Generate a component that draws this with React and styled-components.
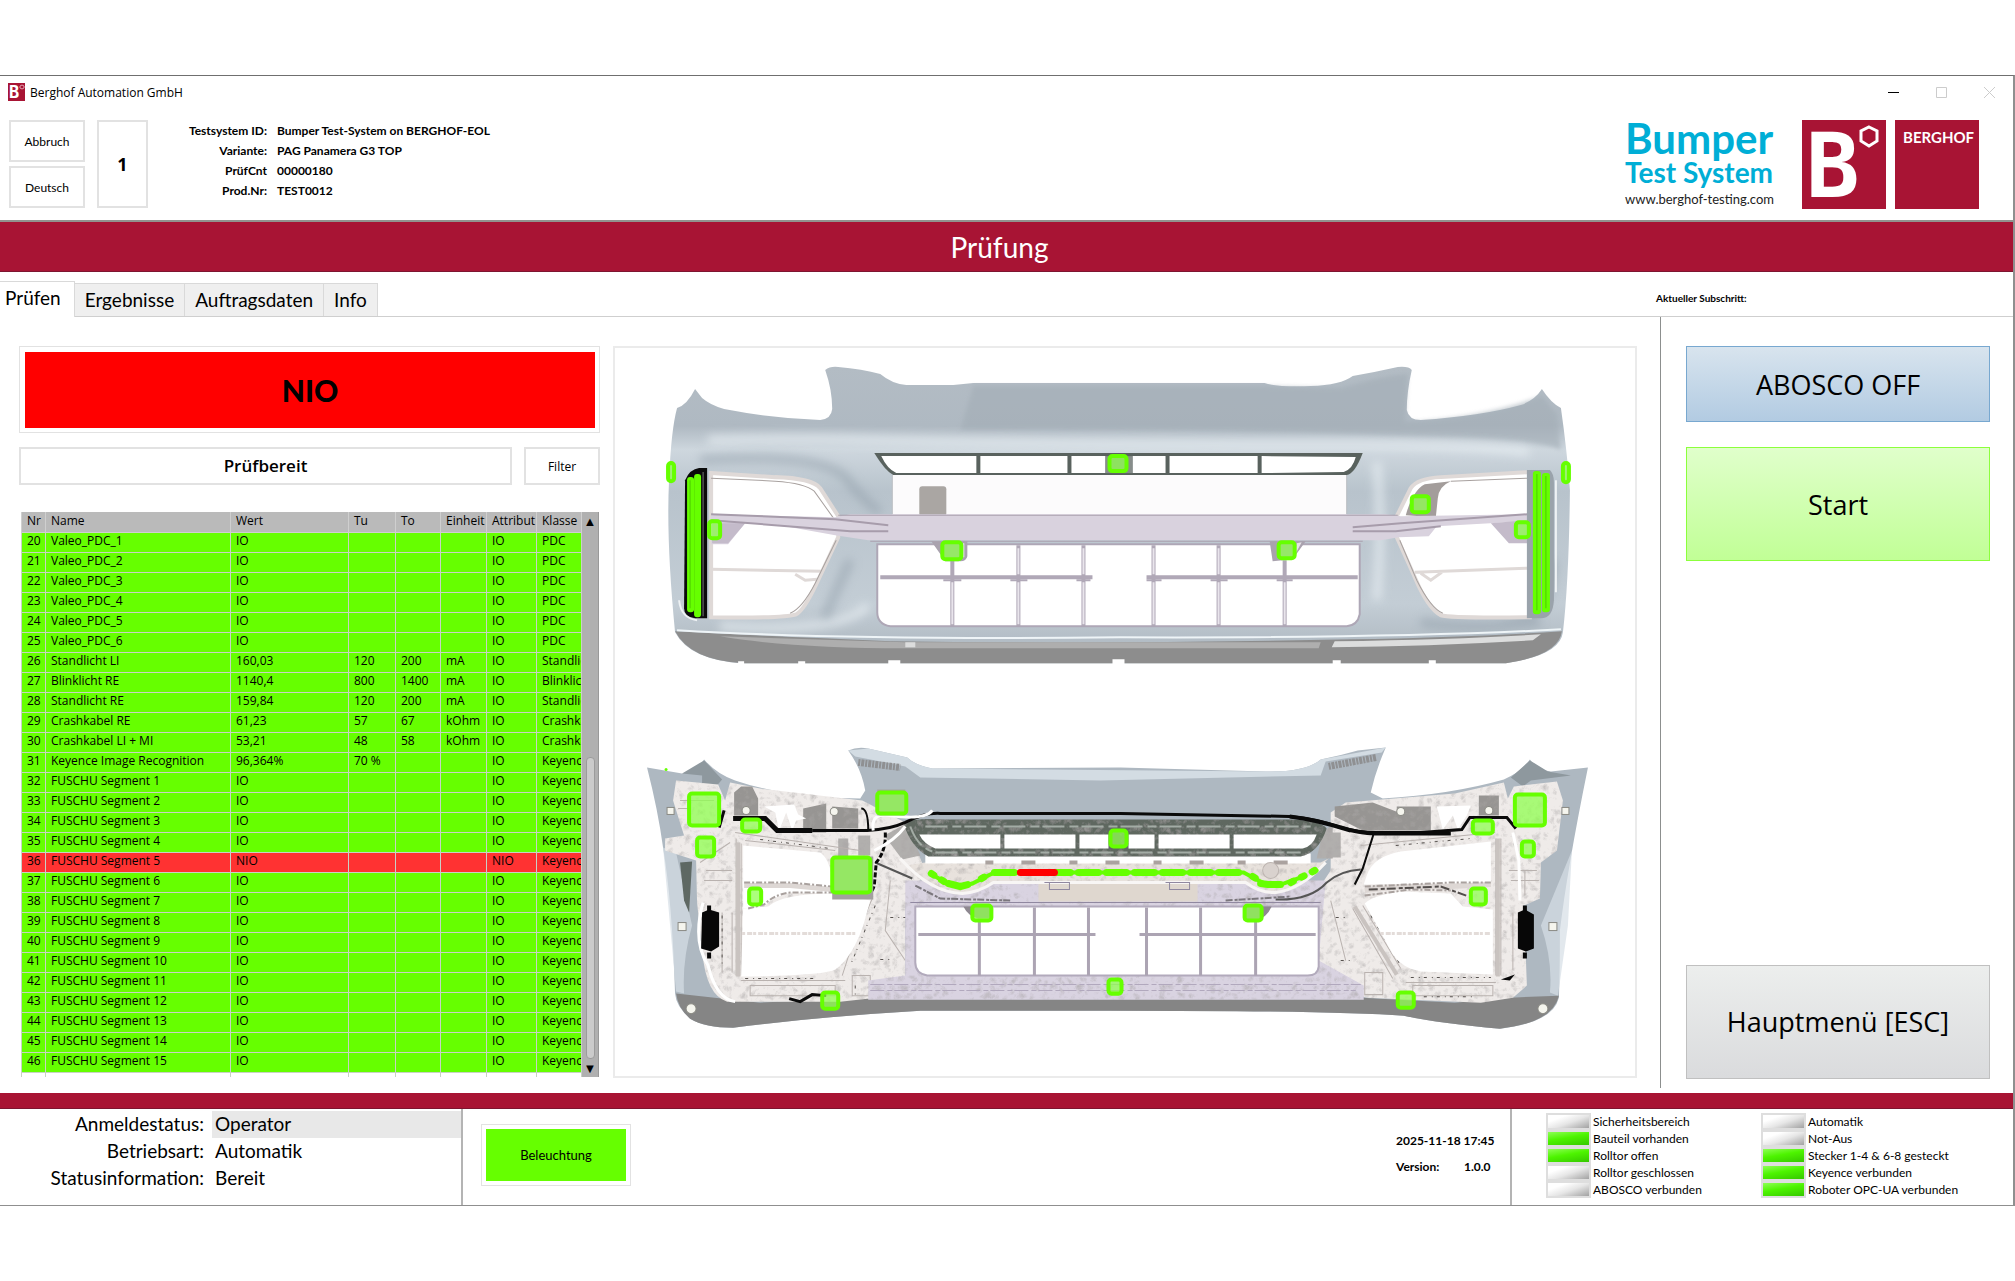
import React, { useState } from 'react';
import styled, { createGlobalStyle, css } from 'styled-components';

const color = {
    brand: '#a81434',
    cyan: '#00aed6',
    ok: '#66ff00',
    fail: '#ff0000',
    failRow: '#ff3232',
    line: '#e2e2e2',
    dark: '#8c8f8e',
    grid: '#c8d2c4'
};

const font = {
    label: "Lato, 'Noto Sans', sans-serif",
    ui: "'Open Sans', 'Noto Sans', sans-serif"
};

const GlobalStyle = createGlobalStyle`
    * {
        box-sizing: border-box;
    }

    body {
        margin: 0;
        background: #fff;
        color: #000;
        font-family: ${font.label};
    }

    button {
        font: inherit;
        color: inherit;
        cursor: pointer;
    }
`;

const Page = styled.div`
    padding: 75px 0;
`;

const Window = styled.div`
    border-top: 1px solid #6f6f6f;
    border-right: 2px solid #8f8f8f;
    border-bottom: 1px solid #8f8f8f;
    background: #fff;
`;

const TitleBar = styled.div`
    display: flex;
    align-items: center;
    height: 32px;
    padding-left: 8px;
    gap: 5px;
    font-family: ${font.ui};
    font-size: 12px;
`;

const WindowButtons = styled.div`
    display: flex;
    margin-left: auto;
`;

const WindowButton = styled.button`
    display: flex;
    align-items: center;
    justify-content: center;
    width: 48px;
    height: 28px;
    padding: 0;
    border: 0;
    background: none;
`;

const Header = styled.header`
    display: flex;
    align-items: flex-start;
    padding: 12px 33px 11px 9px;
    border-bottom: 2px solid #93938f;
`;

const ButtonStack = styled.div`
    display: flex;
    flex-direction: column;
    gap: 4px;
    margin-right: 12px;
`;

const OutlineButton = styled.button`
    width: 76px;
    height: ${props => props.$height || 42}px;
    padding: 0;
    border: 2px solid ${color.line};
    background: #fff;
    font-family: ${props => props.$ui ? font.ui : font.label};
    font-size: 12px;
`;

const Station = styled.div`
    display: flex;
    align-items: center;
    justify-content: center;
    width: 51px;
    height: 88px;
    border: 2px solid ${color.line};
    font-family: ${font.ui};
    font-size: 18px;
    font-weight: 700;
`;

const Facts = styled.dl`
    display: grid;
    grid-template-columns: 110px auto;
    column-gap: 10px;
    margin: 1px 0 0 9px;
    font-size: 12px;
    font-weight: 700;
    line-height: 20px;

    dt {
        text-align: right;
    }

    dd {
        margin: 0;
    }
`;

const Logos = styled.div`
    display: flex;
    align-items: flex-start;
    gap: 28px;
    margin-left: auto;
`;

const Product = styled.div`
    color: ${color.cyan};
    font-weight: 700;
    white-space: nowrap;
`;

const ProductName = styled.div`
    font-size: 42px;
    line-height: 37px;
`;

const ProductLine = styled.div`
    font-size: 28px;
    line-height: 30px;
`;

const ProductLink = styled.a`
    display: block;
    padding-top: 2px;
    color: #222;
    font-size: 13px;
    font-weight: 400;
    line-height: 20px;
    text-decoration: none;
`;

const Title = styled.h1`
    margin: 0;
    padding: 1px 14px 0 0;
    background: ${color.brand};
    border-bottom: 1px solid #7d1530;
    color: #fff;
    font-family: ${font.label};
    font-size: 28px;
    font-weight: 400;
    line-height: 48px;
    text-align: center;
`;

const TabBar = styled.div`
    display: flex;
    align-items: flex-end;
    height: 45px;
    border-bottom: 1px solid #cfcfcf;
`;

const Tab = styled.button`
    height: 33px;
    padding: 0 10px 2px;
    border: 1px solid #d9d9d9;
    border-width: 1px 1px 0 0;
    background: #efefef;
    font-size: 19px;

    ${props => props.$active && css`
        height: 36px;
        margin-bottom: -1px;
        padding: 0 13px 4px 5px;
        background: #fff;
    `}
`;

const Substep = styled.div`
    width: 357px;
    margin-left: auto;
    font-size: 10px;
    font-weight: 700;
    line-height: 36px;
`;

const Main = styled.main`
    display: grid;
    grid-template-columns: 581px minmax(0, 1fr) 353px;
    padding-left: 19px;
    margin-bottom: 5px;
`;

const Results = styled.section`
    padding: 29px 0 10px;
`;

const Verdict = styled.div`
    height: 87px;
    padding: 5px 4px 4px 5px;
    border: 1px solid ${color.line};

    strong {
        display: flex;
        align-items: center;
        justify-content: center;
        height: 100%;
        background: ${color.fail};
        font-size: 30px;
        font-weight: 900;
    }
`;

const StateRow = styled.div`
    display: flex;
    gap: 12px;
    margin: 14px 0 27px;
`;

const State = styled.div`
    flex: 1;
    border: 2px solid ${color.line};
    font-family: ${font.ui};
    font-size: 17px;
    font-weight: 600;
    line-height: 34px;
    text-align: center;
`;

const Grid = styled.div`
    display: flex;
    margin: 0 1px 0 2px;
`;

const Table = styled.table`
    flex: 1;
    min-width: 0;
    width: 100%;
    table-layout: fixed;
    border-collapse: collapse;
    font-family: ${font.ui};
    font-size: 12px;
    line-height: 16px;

    th,
    td {
        height: 20px;
        padding: 0 0 2px 5px;
        border: 1px solid ${color.grid};
        border-width: 0 1px 1px 1px;
        overflow: hidden;
        font-weight: 400;
        text-align: left;
        white-space: nowrap;
    }

    th {
        border-color: #cfcfcf;
        background: #bababa;
    }
`;

const Row = styled.tr`
    background: ${props => props.$failed ? color.failRow : color.ok};
`;

const SpareRow = styled.tr`
    td {
        height: 5px;
        padding: 0;
        border-bottom: 0;
    }
`;

const Scroll = styled.div`
    display: flex;
    flex-direction: column;
    width: 18px;
    border-right: 1px solid #999;
    background: #b0b0b0;
`;

const ScrollButton = styled.button`
    height: 18px;
    padding: 0;
    border: 0;
    background: none;
    font-size: 13px;
    line-height: 18px;
`;

const Thumb = styled.div`
    flex: 0 1 302px;
    margin: auto 3px 0 4px;
    border: 1px solid #9b9b9b;
    border-radius: 4px;
    background: #cbcbcb;
`;

const Picture = styled.figure`
    margin: 29px 23px 10px 13px;
    border: 2px solid #ebebeb;

    svg {
        display: block;
        width: 100%;
        height: 100%;
    }
`;

const Actions = styled.aside`
    display: flex;
    flex-direction: column;
    padding: 29px 23px 9px 25px;
    border-left: 1px solid ${color.dark};
`;

const tones = {
    blue: ['#d8e4ee', '#b2cbe2', '#78a8d0'],
    green: ['#e0ffcb', '#c1ff96', '#8cff3c'],
    grey: ['#eceeed', '#dadbdd', '#c0c0c0']
};

const ActionButton = styled.button`
    height: ${props => props.$tall ? 114 : 76}px;
    margin-bottom: 25px;
    padding: 0;
    border: 1px solid ${props => tones[props.$tone][2]};
    background: linear-gradient(${props => tones[props.$tone][0]}, ${props => tones[props.$tone][1]});
    font-family: ${font.ui};
    font-size: 27px;

    &:last-child {
        margin: auto 0 0;
    }
`;

const Divider = styled.div`
    height: 16px;
    background: ${color.brand};
    border-bottom: 1px solid #7d1530;
`;

const Footer = styled.footer`
    display: flex;
    min-height: 96px;
`;

const Session = styled.dl`
    display: grid;
    grid-template-columns: 204px 1fr;
    grid-auto-rows: 27px;
    column-gap: 8px;
    width: 463px;
    margin: 0;
    padding-top: 2px;
    border-right: 2px solid #b4b4b4;
    font-size: 19px;
    line-height: 26px;

    dt {
        text-align: right;
    }

    dd {
        margin: 0;
        padding-left: 3px;
    }

    dd:first-of-type {
        background: #e8e8e8;
    }
`;

const Light = styled.div`
    align-self: flex-start;
    margin: 15px 0 0 18px;
    padding: 4px;
    border: 1px solid ${color.line};
`;

const LightButton = styled.button`
    display: block;
    width: 140px;
    height: 52px;
    border: 0;
    background: ${color.ok};
    font-size: 13px;
`;

const Build = styled.div`
    display: grid;
    grid-template-columns: 68px 31px;
    align-content: start;
    margin: 19px 15px 0 auto;
    font-size: 12px;
    font-weight: 700;
    line-height: 26px;
    white-space: nowrap;

    time {
        grid-column: 1 / -1;
    }
`;

const Signals = styled.ul`
    display: grid;
    grid-template-columns: 215px 1fr;
    grid-template-rows: repeat(5, 17px);
    grid-auto-flow: column;
    width: 503px;
    margin: 0;
    padding: 4px 0 0 34px;
    border-left: 2px solid #b4b4b4;
    list-style: none;
    font-size: 12px;
    line-height: 17px;
`;

const Signal = styled.li`
    display: flex;
    align-items: center;
    gap: 2px;

    &::before {
        content: '';
        width: 41px;
        height: 13px;
        border: 2px solid #dedede;
        background: ${props => props.$on
            ? 'linear-gradient(170deg, #8dff55, #4df400 45%, #36c800)'
            : 'linear-gradient(160deg, #fff 25%, #e6e6e6 55%, #a2a2a2)'};
    }
`;

const rows = [
    [20, 'Valeo_PDC_1', 'IO', '', '', '', 'IO', 'PDC'],
    [21, 'Valeo_PDC_2', 'IO', '', '', '', 'IO', 'PDC'],
    [22, 'Valeo_PDC_3', 'IO', '', '', '', 'IO', 'PDC'],
    [23, 'Valeo_PDC_4', 'IO', '', '', '', 'IO', 'PDC'],
    [24, 'Valeo_PDC_5', 'IO', '', '', '', 'IO', 'PDC'],
    [25, 'Valeo_PDC_6', 'IO', '', '', '', 'IO', 'PDC'],
    [26, 'Standlicht LI', '160,03', '120', '200', 'mA', 'IO', 'Standlicht'],
    [27, 'Blinklicht RE', '1140,4', '800', '1400', 'mA', 'IO', 'Blinklicht'],
    [28, 'Standlicht RE', '159,84', '120', '200', 'mA', 'IO', 'Standlicht'],
    [29, 'Crashkabel RE', '61,23', '57', '67', 'kOhm', 'IO', 'Crashkabel'],
    [30, 'Crashkabel LI + MI', '53,21', '48', '58', 'kOhm', 'IO', 'Crashkabel'],
    [31, 'Keyence Image Recognition', '96,364%', '70 %', '', '', 'IO', 'Keyence'],
    ...Array.from({ length: 15 }, (_, i) => {
        const result = i === 4 ? 'NIO' : 'IO';
        return [32 + i, `FUSCHU Segment ${i + 1}`, result, '', '', '', result, 'Keyence'];
    })
];

const columns = [
    ['Nr', 24],
    ['Name', 185],
    ['Wert', 118],
    ['Tu', 47],
    ['To', 45],
    ['Einheit', 46],
    ['Attribut', 50],
    ['Klasse', 45]
];

const signals = [
    ['Sicherheitsbereich', false],
    ['Bauteil vorhanden', true],
    ['Rolltor offen', true],
    ['Rolltor geschlossen', false],
    ['ABOSCO verbunden', false],
    ['Automatik', false],
    ['Not-Aus', false],
    ['Stecker 1-4 & 6-8 gesteckt', true],
    ['Keyence verbunden', true],
    ['Roboter OPC-UA verbunden', true]
];

// x, y, width, height of every checked part
const frontMarks = [
    [668, 463, 6, 18], [709, 521, 11, 17], [942, 542, 19, 17], [1109, 456, 17, 15],
    [1278, 542, 16, 16], [1411, 496, 17, 16], [1515, 522, 13, 15], [1562, 463, 6, 19]
];

const rearMarks = [
    [689, 793, 30, 32], [697, 837, 17, 19], [742, 819, 18, 12], [877, 792, 29, 21],
    [832, 857, 38, 35], [749, 888, 12, 16], [972, 905, 19, 15], [822, 992, 16, 16],
    [1108, 979, 13, 14], [1110, 830, 16, 16], [1514, 794, 30, 31], [1521, 841, 12, 15],
    [1472, 820, 20, 13], [1470, 888, 15, 16], [1244, 905, 17, 15], [1397, 992, 16, 15]
];

const Marks = ({ items }) => (
    <g fill="#90ff50" fillOpacity="0.75" stroke="#66ff00" strokeWidth="4">
        {items.map(([x, y, w, h]) => (
            <rect key={`${x}-${y}`} x={x} y={y} width={w} height={h} rx="3" />
        ))}
    </g>
);

const FrontBumper = () => (
    <g>
        <path
            fill="url(#shell)"
            d="M677 408 Q687 405 695 389 L702 398 Q710 405 724 409 Q770 418 820 420 Q831 419 832 409 Q832 390 825 370 Q830 366 838 367 Q862 369 880 374 Q892 384 906 385 L953 385 L973 383 H1264 Q1276 387 1310 386 Q1340 385 1352 376 Q1375 372 1397 367 Q1408 366 1411 370 Q1406 392 1406 410 Q1408 420 1420 420 Q1480 416 1520 405 Q1534 400 1541 389 Q1550 403 1560 408 Q1566 450 1569 490 Q1568 580 1562 632 Q1559 655 1505 663 H743 Q690 660 675 632 Q666 540 669 480 Q671 430 677 408 Z"
        />
        <path fill="#a3adb6" opacity="0.6" filter="url(#blend)" d="M973 386 H1264 L1340 388 Q1390 374 1407 374 L1404 422 Q1480 418 1541 396 L1556 414 L1560 450 Q1540 438 1400 436 Q1200 428 960 430 Z" />
        <path fill="none" stroke="#eef4f8" strokeWidth="9" opacity="0.6" filter="url(#soft)" d="M708 440 Q770 438 835 439 Q1000 444 1363 444 Q1480 445 1528 452 M1376 462 Q1382 520 1376 600 M720 626 Q840 634 868 605" />
        <path fill="none" stroke="#8f9ca7" strokeWidth="9" opacity="0.5" filter="url(#soft)" d="M700 460 Q820 452 846 478 Q862 500 880 512 M850 560 L824 618 M1552 560 Q1550 620 1500 624 M1420 622 Q1470 630 1540 622" />
        <path fill="#8d8d8d" d="M675 631 Q770 636 890 641 Q1120 644 1350 639 Q1470 637 1561 631 Q1558 655 1505 663 H743 Q690 660 675 631 Z" />
        <path fill="#aeaeae" d="M720 636 L905 642 H1320 L1318 648 H905 Q790 648 720 636 Z" />
        <path fill="#dcdddd" d="M1334 641 Q1460 639 1540 634 L1532 640 Q1430 646 1331 647 Z M905 642 h10 v5 h-10 z" />
        <path fill="none" stroke="#eef4f7" strokeWidth="2" d="M677 630 Q850 640 1120 637 Q1400 638 1560 629" />
        <g fill="#fff">
            <path d="M738 661 h6 v3 h-6 z M798 661 h7 v3 h-7 z M888 660 h12 v4 h-12 z M1112 659 h12 v5 h-12 z M1332 660 h8 v4 h-8 z M1428 660 h7 v4 h-7 z" />
        </g>

        {/* upper grille */}
        <path fill="#59625e" d="M874 453 H1362 Q1354 474 1346 475 H893 Q885 471 874 453 Z" />
        <path fill="#fff" d="M881 456 H976 V473 H896 Q887 469 881 456 Z M980 456 H1067 V473 H980 Z M1071 456 H1105 V473 H1071 Z M1132 456 H1165 V473 H1132 Z M1169 456 H1257 V473 H1169 Z M1261 456 L1355 457 Q1352 469 1343 472 L1261 473 Z" />
        <path fill="#878d8b" d="M1105 456 h27 v17 h-27 z" />
        <path fill="#fcfbfc" d="M892 475 H1346 V516 H892 Z" />
        <path fill="none" stroke="#b9bdc0" d="M892 475 V514 M1346 475 V514" />
        <rect x="919" y="486" width="27" height="30" rx="3" fill="#aaa6a3" />

        {/* lamp openings */}
        <g fill="#fff" stroke="#dfd9d7" strokeWidth="4">
            <path d="M711 473 L775 477 Q812 478 820 488 L838 516 V537 L817 582 Q804 610 796 614 Q785 618 711 617 Z" />
            <path d="M1529 472 L1440 477 Q1417 478 1410 488 L1396 516 V537 L1414 577 Q1427 608 1440 615 Q1450 618 1529 617 Z" />
            <path fill="none" strokeWidth="3" d="M711 569 L822 571 M1414 572 L1527 568 M795 574 L805 580 L817 579 M1420 573 L1430 580 L1441 572" />
        </g>
        <path fill="none" stroke="#a8a19f" d="M711 478 L775 481 Q805 483 814 491 L834 519 M1527 478 L1450 481 M836 540 L815 583 Q802 608 790 613 M1399 540 L1416 580 Q1430 608 1442 613" />
        <path fill="#a39d9b" d="M1405 515 Q1412 490 1424 484 L1450 481 Q1438 486 1437 498 L1435 517 Z" />
        <path fill="#d9d2de" d="M711 514 L835 517 L850 514 H1385 L1400 516 L1527 514 V521 L1436 526 L1428 536 L1398 537 L1380 540 H868 L835 535 L785 526 L745 523 L728 544 H711 Z" />
        <path fill="#c4bbca" d="M1490 523 L1527 520 V543 H1508 Z M712 523 L745 523 L728 543 H712 Z" />
        <path fill="none" stroke="#a79cab" strokeWidth="2" d="M711 514 L835 519 L888 525 M711 520 L800 527 L850 531 H888 M1352 527 L1400 523 L1527 514 M1352 531 H1395 L1440 526" />
        <path fill="none" stroke="#aaa1ae" d="M838 515 H1397 M870 541 H1362" />
        <path fill="#0b0b0b" d="M685 480 Q690 469 699 468 H707 V618 H695 Q684 617 684 608 Z" />
        <path fill="none" stroke="#777" d="M703 472 V616" />
        <path fill="#9aa3ab" d="M1526 470 H1549 Q1553 474 1553 482 V600 Q1552 618 1540 618 H1526 Z" />
        <path fill="none" stroke="#eef2f4" strokeWidth="2" d="M1555 480 V592 M679 600 Q681 618 697 620" />
        <g fill="#66ff00">
            <rect x="687" y="477" width="7" height="135" rx="3" />
            <rect x="694" y="474" width="7" height="143" rx="3" />
            <rect x="1532" y="471" width="8" height="143" rx="3" />
            <rect x="1541" y="473" width="8" height="139" rx="3" />
        </g>
        <path fill="none" stroke="#4ccc00" d="M690 480 V608 M1536 474 V610 M1545 476 V608" />

        {/* lower grille */}
        <path fill="#fff" stroke="#aea7b6" strokeWidth="2" d="M877 544 H1359 V614 Q1357 625 1346 626 H890 Q877 624 877 612 Z" />
        <g fill="none" stroke="#b0a8b7" strokeWidth="4">
            <path d="M952 560 V626 M1018 545 V626 M1083 545 V626 M1153 545 V626 M1218 545 V626 M1284 560 V626" />
            <path d="M880 577 H1092 M1146 577 H1357" />
            <path d="M943 580 h18 M1010 580 h17 M1076 580 h14 M1146 580 h15 M1210 580 h17 M1276 580 h16" strokeWidth="2" />
        </g>
        <path fill="none" stroke="#e9e5ec" strokeWidth="2" d="M952 582 V624 M1018 548 V574 M1018 582 V624 M1083 548 V574 M1083 582 V624 M1153 548 V574 M1153 582 V624 M1218 548 V574 M1218 582 V624 M1284 582 V624" />
        <path fill="#a9a2ae" d="M931 541 H967 V556 Q966 561 960 561 H945 Z M1269 541 H1305 L1292 559 L1272 561 Z" />
        <path fill="#e6e2e9" d="M961 543 h3 v14 h-3 z M1296 543 l5 -1 l-7 13 z" />
        <Marks items={frontMarks} />
    </g>
);

const RearBumper = () => (
    <g>
        <path
            fill="#aeb8c1"
            d="M647 767 L682 773 Q697 770 704 759 Q717 774 735 780 Q770 792 820 797 L860 798 L865 790 Q861 768 848 750 Q857 746 868 748 L907 757 Q915 765 932 768 L1120 767 L1265 771 Q1305 772 1320 759 Q1340 755 1357 750 L1385 747 Q1375 770 1370 792 L1382 798 Q1450 794 1503 779 Q1520 772 1529 759 Q1537 770 1550 771 L1587 767 Q1566 870 1559 930 Q1559 970 1558 997 Q1552 1022 1499 1028 Q1440 1023 1403 1015 Q1330 1010 1110 1010 H920 Q830 1015 733 1027 Q705 1027 690 1018 Q676 1006 675 993 Q672 900 663 847 Q658 810 647 767 Z"
        />
        <path fill="#d3dce3" d="M868 748 L907 757 Q915 765 932 768 L1265 771 Q1305 772 1320 759 L1385 747 L1381 752 L1325 761 L1320 775 L1100 780 L920 777 L905 766 L855 756 L848 750 Z" />
        <path fill="none" stroke="#8f9092" strokeWidth="7" strokeDasharray="2 1 3 1" d="M858 762 L900 767 M1328 766 L1376 757" />
        <path fill="#8e989e" d="M682 773 L704 760 L722 779 L716 786 H702 V775 Z M1510 777 L1529 760 L1547 771 L1570 775 L1530 780 L1522 786 Z" />
        <path fill="#d5dee5" d="M663 847 L676 852 L692 925 Q682 960 684 993 L676 991 Z M1571 850 L1567 925 L1557 995 L1549 992 Q1552 960 1540 925 Z" opacity="0.7" />
        <path fill="#858585" d="M676 993 L760 1002 L867 997 H1361 L1454 1002 L1509 997 L1558 995 Q1552 1022 1499 1028 Q1440 1023 1403 1015 Q1330 1010 1110 1010 H920 Q830 1015 733 1027 Q705 1027 690 1018 Q678 1008 676 993 Z" />

        {/* carrier frames */}
        <g filter="url(#grain)">
            <path fill="#efebe9" d="M676 780 L718 784 L725 800 L730 782 L760 788 L862 800 L905 822 L925 870 L905 905 V998 H867 L840 1001 H727 Q706 995 702 950 L697 902 L696 860 L665 850 V838 L684 835 L673 800 Z" />
            <path fill="#efebe9" d="M1513 786 L1556 781 L1562 800 L1556 850 L1540 862 L1539 898 L1523 905 L1526 985 L1512 997 L1480 1002 L1367 997 L1310 985 V900 L1330 870 V812 L1345 802 L1454 793 L1503 782 L1507 798 Z" />
            <path fill="#979593" d="M734 792 L741 786 H752 L758 798 V815 H734 Z M803 808 L826 803 V832 H803 Z M832 806 L858 808 V828 H832 Z M1334 806 L1372 802 L1398 812 V830 H1362 L1334 816 Z M1396 806 H1430 V830 H1396 Z M1478 795 H1498 V815 H1478 Z" />
            <path fill="#b1afad" d="M1330 832 h10 v25 h-10 z M838 838 h10 v19 h-10 z M858 835 h12 v20 h-12 z M884 835 l22 -12 l14 32 l-18 4 z M1322 832 l10 -8 v34 h-16 z" />
        </g>
        <path fill="#fff" d="M764 806 L794 804 L798 814 L806 818 L796 820 L792 830 L786 812 L779 830 L775 812 Z M1436 806 L1470 805 L1466 815 L1457 829 L1452 815 L1442 829 Z" />
        <g fill="none" stroke="#b9b2af">
            <path d="M735 832 L860 850 M736 838 V975 M741 843 V975 M745 840 L835 850 M865 905 L830 970 M872 898 L850 950 L842 975 M890 880 L885 930 L905 960 M741 980 H845 M750 985 h85 v10 h-85 z M852 975 h18 v20 h-18 z" />
            <path d="M1360 845 L1494 832 M1495 838 V975 M1500 838 V975 M1362 905 L1400 968 M1352 908 L1392 978 M1330 900 L1345 960 M1405 982 H1495 M1412 985 h80 v10 h-80 z M1364 972 h18 v22 h-18 z" />
            <path d="M680 800 h34 M678 808 h10 M700 862 l30 -20 M706 870 h26 M704 880 h28 M722 912 v60 M732 912 v60 M1508 870 h28 M1510 880 h28 M1512 912 v58 M1524 870 v25" />
        </g>
        <path fill="none" stroke="#c9c3c0" strokeWidth="4" d="M738 842 V976 M1497 838 V976 M1354 906 L1396 974" />
        <g fill="none" stroke="#57524f" strokeDasharray="3 5 1 4">
            <path d="M760 839 L830 848 M1395 845 L1470 838 M875 905 L850 965 M890 917 h20 M880 959 h12 M1335 917 h12 M1340 960 h12 M745 978 h70 M1410 977 h80 M722 915 v50 M1370 915 L1400 965 M855 985 v10 M1423 996 h50" />
        </g>
        <g fill="#fff">
            <path d="M743 845 L820 852 Q832 860 833 893 L790 892 Q770 898 765 905 L743 908 V884 L743 882 H832 V882 H743 Z" />
            <path d="M743 908 L768 906 Q782 893 835 893 L870 900 L863 925 Q852 957 835 969 Q825 975 741 976 Z" />
            <path d="M1490 841 L1400 851 Q1372 856 1366 875 L1363 884 L1490 882 Z" />
            <path d="M1364 903 Q1372 895 1400 891 L1450 893 L1462 906 L1492 909 V974 L1420 971 Q1402 968 1392 954 Z" />
        </g>
        <path fill="none" stroke="#ddd7d4" strokeWidth="5" d="M744 885 H790 L832 889 M1364 890 L1400 886 L1450 886 L1490 884" />
        <path fill="none" stroke="#a9a19e" strokeWidth="2" strokeDasharray="6 2 2 2" d="M744 882 H790 L832 886 M748 908 L764 904 Q774 894 790 892 H832 M1364 886 L1450 882 H1490 M1364 895 L1410 889 L1450 890" />
        <path fill="none" stroke="#524d4b" strokeWidth="2" strokeDasharray="9 3 4 2" d="M1368 889 L1440 886 L1468 896" />
        <path fill="none" stroke="#e3dcd9" strokeWidth="3" strokeDasharray="3 2 5 1" d="M742 933 H855 M1380 933 H1490" />

        {/* centre carrier */}
        <g filter="url(#grain)">
            <path fill="#d9d3e1" d="M905 880 H1325 L1318 960 L1363 985 V999 H868 V980 L905 975 Z" />
            <path fill="#e8e2dd" d="M905 865 L925 862 H1320 L1328 858 L1304 880 Q1285 893 1265 890 L1245 882 H993 Q975 895 955 892 Q920 885 905 865 Z" />
        </g>
        <path fill="#dfd7cf" d="M1038 881 H1197 V901 H1038 Z" />
        <path fill="none" stroke="#b1a8bd" strokeDasharray="14 3 5 2" d="M870 984 H1360 M870 990 H1355" />
        <path fill="none" stroke="#f8f6f5" strokeWidth="3" d="M900 858 Q930 892 962 893 Q978 892 993 882 H1245 Q1260 893 1275 892 Q1300 889 1325 862" />
        <path fill="#fff" d="M925 853 H1310 V863 H925 Z" />
        <path fill="none" stroke="#aaa29f" strokeWidth="4" strokeDasharray="8 28 14 34" d="M985 862 H1310" />
        <path fill="none" stroke="#9088a0" d="M1044 882 h25 v7 h-20 v-7 M1165 882 h24 v7 h-20 v-7 M910 902 H1320" />
        <circle cx="1270" cy="870" r="8" fill="#d9d2ce" stroke="#bdb5b1" />
        <path fill="#5e6760" filter="url(#grain)" d="M903 822 Q915 817 945 819 H1290 Q1320 820 1326 828 Q1318 852 1300 856 H928 Q910 846 903 822 Z" />
        <path fill="none" stroke="#a3aca5" strokeDasharray="22 5 9 3" d="M925 826 H1310 M935 852 H1300 M910 826 Q917 846 932 851" strokeWidth="2" />
        <path fill="#fff" d="M919 834 H1000 V848 H935 Q923 843 919 834 Z M1004 834 H1075 V848 H1004 Z M1079 834 H1108 V848 H1079 Z M1128 834 H1154 V848 H1128 Z M1158 834 H1229 V848 H1158 Z M1233 834 H1316 Q1312 846 1302 848 H1233 Z" />
        <path fill="#fff" stroke="#b2aabc" strokeWidth="2" d="M915 906 H1318 V966 Q1317 975 1307 975 H927 Q915 973 915 962 Z" />
        <g fill="none" stroke="#aca4b3" strokeWidth="3">
            <path d="M979 920 V975 M1034 907 V975 M1088 907 V975 M1146 907 V975 M1200 907 V975 M1255 920 V975" />
            <path d="M918 934 H1095 M1139 934 H1315" />
        </g>
        <path fill="#8e8890" d="M963 906 H991 V918 H978 Q968 916 963 906 Z M1243 906 H1271 Q1266 918 1254 920 H1243 Z" />

        {/* wiring */}
        <g fill="none" stroke="#0a0a0a" strokeWidth="3">
            <path strokeWidth="5" d="M733 818 H765 L777 830 H812" />
            <path d="M812 830 L867 830 Q890 829 905 822 Q925 812 940 813 H1120 L1289 816 Q1315 818 1340 827 Q1358 832 1375 832 L1420 832 L1461 829 L1469 817 H1506 L1515 828" />
            <path d="M1289 816 Q1315 819 1350 830 M1340 827 Q1358 833 1375 833 H1450" strokeWidth="4" />
            <path strokeWidth="2" d="M861 808 Q868 808 868 830 M1373 833 L1362 868 L1354 884" />
            <path stroke="#555" strokeWidth="2" d="M1360 869 Q1340 870 1326 882 Q1310 900 1275 899 M875 862 L912 878" />
            <path strokeDasharray="5 2" d="M885 832 Q886 850 876 862 L874 885 Q872 893 865 895" />
            <path d="M724 810 L719 827 M789 998 L800 1001 L812 994 L826 995" />
        </g>
        <path fill="none" stroke="#fff" strokeWidth="3" d="M905 826 Q895 840 874 850 M873 830 Q870 812 890 815 Q925 820 932 810 M703 902 Q692 940 708 965 Q716 998 735 1001 M1512 832 L1518 860 L1519 900" />
        <path fill="none" stroke="#7b777d" strokeWidth="2" strokeDasharray="7 2 3 1" d="M915 885 L940 898 L1010 900 M1225 900 L1290 896" />
        <g fill="#070707">
            <path d="M702 912 L709 909 L719 912 V946 L711 951 L701 948 Z M1517 912 L1524 909 L1533 914 V948 L1525 951 L1517 948 Z" />
            <path d="M707 905 h4 v6 h-4 z M707 952 h4 v6 h-4 z M1522 905 h4 v6 h-4 z M1522 952 h4 v6 h-4 z M1500 979 l14 -5 l-5 6 z" />
        </g>
        <path fill="#5e6863" d="M680 862 L692 861 L689 912 L684 900 Z" />
        <g fill="#f5f5ee" stroke="#8a8a84">
            <circle cx="746" cy="810" r="4" />
            <circle cx="834" cy="811" r="4" />
            <circle cx="1400" cy="811" r="4" />
            <circle cx="1488" cy="810" r="4" />
            <rect x="678" y="922" width="8" height="8" />
            <rect x="1548" y="922" width="8" height="8" />
            <rect x="667" y="807" width="7" height="7" />
            <rect x="1561" y="807" width="7" height="7" />
            <circle cx="691" cy="1008" r="5" />
            <circle cx="1542" cy="1008" r="5" />
        </g>
        <path fill="#a3a19f" d="M877 789 h28 v26 h-28 z M832 856 h41 v43 h-41 z" />

        <g fill="none" stroke="#66ff00" strokeLinecap="round">
            <path strokeWidth="7" strokeDasharray="3 9" d="M931 873 L947 883 M981 878 L989 874 M1252 876 L1259 880 M1290 882 L1302 876 L1314 870" />
            <path strokeWidth="7" d="M948 883 L960 886 L972 883 M994 872 H1245 M1260 883 L1267 884 L1280 884" strokeDasharray="20 8" />
            <path strokeWidth="4" d="M930 873 L947 883 L960 886 L972 883 L984 877 L994 872 H1243 L1258 880 L1266 884 L1280 884 L1303 876 M1312 870 h4" />
        </g>
        <path stroke="#ff0000" strokeWidth="7" strokeLinecap="round" d="M1020 872 H1054" />
        <circle cx="666" cy="769" r="1.5" fill="#66ff00" />
        <Marks items={rearMarks} />
    </g>
);

const BerghofLogo = () => (
    <svg width="178" height="89" viewBox="0 0 178 89" role="img" aria-label="Berghof">
        <rect width="84" height="89" fill={color.brand} />
        <rect x="93" width="84" height="89" fill={color.brand} />
        <text x="4" y="77" fill="#fff" fontFamily="'DejaVu Sans Mono', monospace" fontSize="89" fontWeight="700">B</text>
        <path fill="none" stroke="#fff" strokeWidth="3" d="M67 7 L75 11 V21 L67 26 L59 21 V11 Z" />
        <text x="101" y="23" fill="#fff" fontFamily={font.label} fontSize="15" fontWeight="700">BERGHOF</text>
    </svg>
);

const AppIcon = () => (
    <svg width="17" height="18" viewBox="0 0 17 18" aria-hidden="true">
        <rect width="17" height="18" fill={color.brand} />
        <text x="1" y="15" fill="#fff" fontFamily="'DejaVu Sans Mono', monospace" fontSize="17" fontWeight="700">B</text>
        <path fill="none" stroke="#e0a0ae" d="M14 2 L16 3 V5 L14 6 L12 5 V3 Z" />
    </svg>
);

export default function App() {
    const tabs = ['Prüfen', 'Ergebnisse', 'Auftragsdaten', 'Info'];
    const [activeTab, setActiveTab] = useState('Prüfen');

    return (
        <React.Fragment>
            <GlobalStyle />
            <Page>
                <Window>
                    <TitleBar>
                        <AppIcon />
                        Berghof Automation GmbH
                        <WindowButtons>
                            <WindowButton aria-label="Minimieren">
                                <svg width="11" height="11"><path stroke="#000" d="M0 5.5 H11" /></svg>
                            </WindowButton>
                            <WindowButton aria-label="Maximieren">
                                <svg width="11" height="11"><path fill="none" stroke="#ccc" d="M.5 .5 H10.5 V10.5 H.5 Z" /></svg>
                            </WindowButton>
                            <WindowButton aria-label="Schließen">
                                <svg width="11" height="11"><path stroke="#ccc" d="M0 0 L11 11 M11 0 L0 11" /></svg>
                            </WindowButton>
                        </WindowButtons>
                    </TitleBar>

                    <Header>
                        <ButtonStack>
                            <OutlineButton>Abbruch</OutlineButton>
                            <OutlineButton>Deutsch</OutlineButton>
                        </ButtonStack>
                        <Station>1</Station>
                        <Facts>
                            <dt>Testsystem ID:</dt>
                            <dd>Bumper Test-System on BERGHOF-EOL</dd>
                            <dt>Variante:</dt>
                            <dd>PAG Panamera G3 TOP</dd>
                            <dt>PrüfCnt</dt>
                            <dd>00000180</dd>
                            <dt>Prod.Nr:</dt>
                            <dd>TEST0012</dd>
                        </Facts>
                        <Logos>
                            <Product>
                                <ProductName>Bumper</ProductName>
                                <ProductLine>Test System</ProductLine>
                                <ProductLink href="#">www.berghof-testing.com</ProductLink>
                            </Product>
                            <BerghofLogo />
                        </Logos>
                    </Header>

                    <Title>Prüfung</Title>

                    <TabBar>
                        {tabs.map(tab => (
                            <Tab key={tab} $active={tab === activeTab} onClick={() => setActiveTab(tab)}>
                                {tab}
                            </Tab>
                        ))}
                        <Substep>Aktueller Subschritt:</Substep>
                    </TabBar>

                    <Main>
                        <Results>
                            <Verdict><strong>NIO</strong></Verdict>
                            <StateRow>
                                <State>Prüfbereit</State>
                                <OutlineButton $height={38} $ui>Filter</OutlineButton>
                            </StateRow>
                            <Grid>
                                <Table>
                                    <colgroup>
                                        {columns.map(([name, width]) => <col key={name} width={width} />)}
                                    </colgroup>
                                    <thead>
                                        <tr>
                                            {columns.map(([name]) => <th key={name} scope="col">{name}</th>)}
                                        </tr>
                                    </thead>
                                    <tbody>
                                        {rows.map(row => (
                                            <Row key={row[0]} $failed={row[6] === 'NIO'}>
                                                {row.map((cell, i) => <td key={columns[i][0]}>{cell}</td>)}
                                            </Row>
                                        ))}
                                        <SpareRow>
                                            {columns.map(([name]) => <td key={name} />)}
                                        </SpareRow>
                                    </tbody>
                                </Table>
                                <Scroll>
                                    <ScrollButton aria-label="Nach oben">▲</ScrollButton>
                                    <Thumb />
                                    <ScrollButton aria-label="Nach unten">▼</ScrollButton>
                                </Scroll>
                            </Grid>
                        </Results>

                        <Picture>
                            <svg viewBox="615 348 1019 727" role="img" aria-label="Stoßfänger">
                                <defs>
                                    <linearGradient id="shell" x1="0" y1="0" x2="0" y2="1">
                                        <stop offset="0" stopColor="#b3bcc4" />
                                        <stop offset="0.2" stopColor="#afb9c2" />
                                        <stop offset="0.28" stopColor="#ced7de" />
                                        <stop offset="0.42" stopColor="#b8c3cc" />
                                        <stop offset="0.8" stopColor="#c3cdd5" />
                                        <stop offset="1" stopColor="#a9b3bc" />
                                    </linearGradient>
                                    <filter id="soft">
                                        <feGaussianBlur stdDeviation="5" />
                                    </filter>
                                    <filter id="blend">
                                        <feGaussianBlur stdDeviation="2" />
                                    </filter>
                                    <filter id="grain" x="0" y="0" width="1" height="1">
                                        <feTurbulence type="turbulence" baseFrequency="0.12" numOctaves="3" result="noise" />
                                        <feColorMatrix in="noise" values="0 0 0 0 0.4  0 0 0 0 0.38  0 0 0 0 0.38  1.2 0 0 0 -0.32" result="spots" />
                                        <feComposite in="spots" in2="SourceAlpha" operator="in" result="cut" />
                                        <feMerge>
                                            <feMergeNode in="SourceGraphic" />
                                            <feMergeNode in="cut" />
                                        </feMerge>
                                    </filter>
                                </defs>
                                <FrontBumper />
                                <RearBumper />
                            </svg>
                        </Picture>

                        <Actions>
                            <ActionButton $tone="blue">ABOSCO OFF</ActionButton>
                            <ActionButton $tone="green" $tall>Start</ActionButton>
                            <ActionButton $tone="grey" $tall>Hauptmenü [ESC]</ActionButton>
                        </Actions>
                    </Main>

                    <Divider />

                    <Footer>
                        <Session>
                            <dt>Anmeldestatus:</dt>
                            <dd>Operator</dd>
                            <dt>Betriebsart:</dt>
                            <dd>Automatik</dd>
                            <dt>Statusinformation:</dt>
                            <dd>Bereit</dd>
                        </Session>
                        <Light>
                            <LightButton>Beleuchtung</LightButton>
                        </Light>
                        <Build>
                            <time dateTime="2025-11-18T17:45">2025-11-18 17:45</time>
                            <span>Version:</span>
                            <span>1.0.0</span>
                        </Build>
                        <Signals>
                            {signals.map(([name, on]) => <Signal key={name} $on={on}>{name}</Signal>)}
                        </Signals>
                    </Footer>
                </Window>
            </Page>
        </React.Fragment>
    );
}
